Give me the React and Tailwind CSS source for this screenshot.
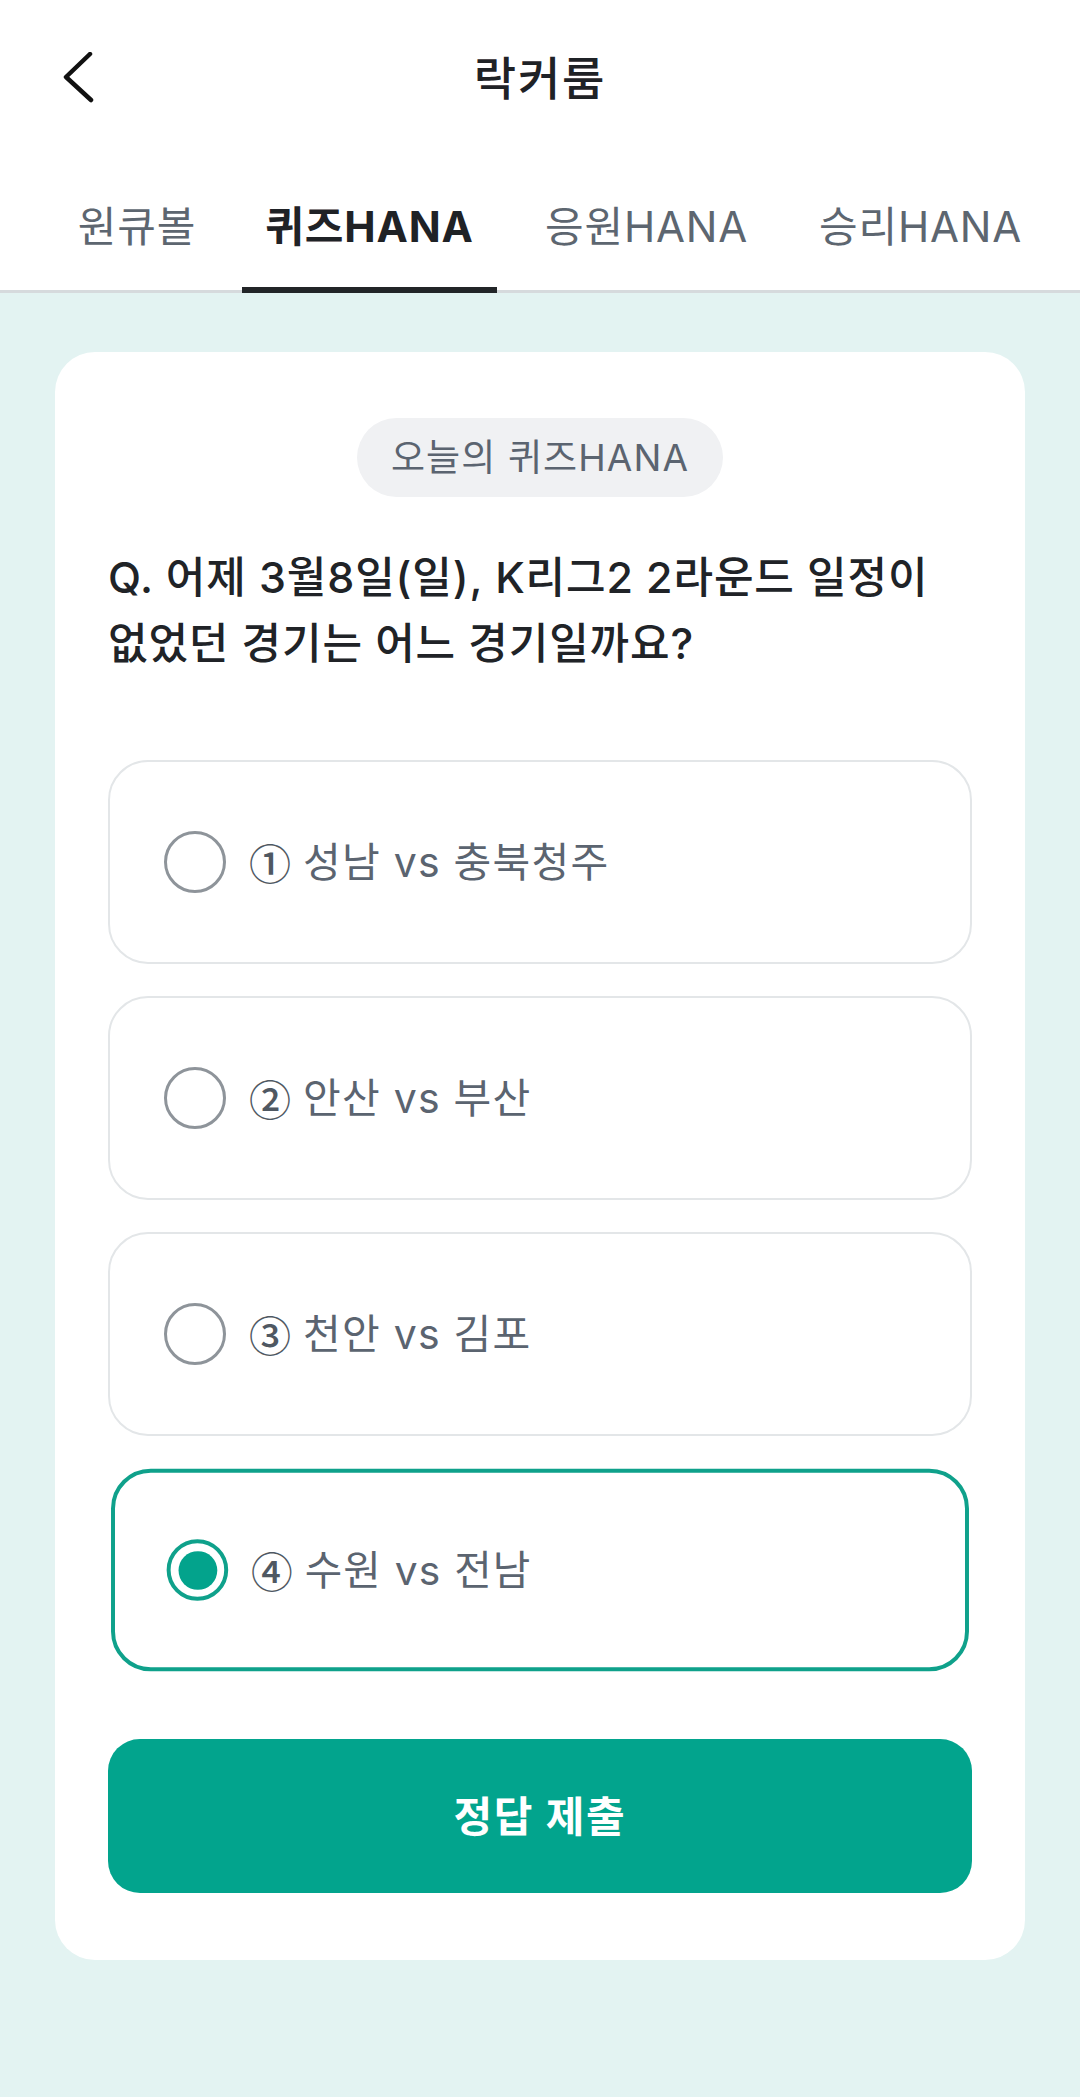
import React from "react";

const tabs = [
  { label: "원큐볼", w: "w-[160px]" },
  { label: "퀴즈HANA", w: "w-[255px]", active: true },
  { label: "응원HANA", w: "w-[249px]" },
  { label: "승리HANA", w: "w-[249px]" },
];

const options = [
  { n: "①", text: "성남 vs 충북청주" },
  { n: "②", text: "안산 vs 부산" },
  { n: "③", text: "천안 vs 김포" },
  { n: "④", text: "수원 vs 전남", selected: true },
];

function Label({ n, text }) {
  return (
    <span className="flex items-center text-[41px] leading-none tracking-[0.03em] text-[#5b6470] whitespace-nowrap">
      <span className="font-[family-name:'Noto_Sans_CJK_KR',sans-serif] font-medium text-[42px] tracking-normal text-[#4f5862] mr-[12px]">
        {n}
      </span>
      {text}
    </span>
  );
}

function Option({ n, text, selected }) {
  if (selected) {
    return (
      <div className="h-[204px] scale-[0.993] rounded-[40px] border-[4px] border-[#0fa18b] bg-white flex items-center pl-[52px] gap-[23px]">
        <div className="w-[62px] h-[62px] rounded-full border-[4px] border-[#0fa18b] flex items-center justify-center shrink-0">
          <div className="w-[39px] h-[39px] rounded-full bg-[#03a38c]" />
        </div>
        <Label n={n} text={text} />
      </div>
    );
  }
  return (
    <div className="h-[204px] rounded-[40px] border-2 border-[#e3e6e8] bg-white flex items-center pl-[54px] gap-[23px]">
      <div className="w-[62px] h-[62px] rounded-full border-[3px] border-[#8e949a] shrink-0" />
      <Label n={n} text={text} />
    </div>
  );
}

export default function App() {
  return (
    <div className="font-[family-name:Inter,'Noto_Sans_CJK_KR',sans-serif] w-[1080px] min-h-[2097px] bg-[#e3f3f2] flex flex-col">
      <div className="bg-white">
        <div className="h-[156px] grid grid-cols-[1fr_auto_1fr] items-center">
          <div className="pl-[62px] flex items-center">
            <svg width="32" height="52" viewBox="0 0 32 52" fill="none">
              <path
                d="M28 2 L4 25 L29 48"
                stroke="#111111"
                strokeWidth="4.5"
                strokeLinecap="round"
                strokeLinejoin="round"
              />
            </svg>
          </div>
          <h1 className="text-[46px] tracking-[0.04em] font-medium text-[#1f2226] leading-none">락커룸</h1>
          <div />
        </div>
        <div className="flex pl-[57px] gap-[25px] border-b-[3px] border-[#d6dadd]">
          {tabs.map((t) => (
            <div
              key={t.label}
              className={`${t.w} h-[137px] -mb-[3px] pt-[11px] flex items-center justify-center border-b-[6px] ${
                t.active ? "border-[#222528]" : "border-transparent"
              }`}
            >
              <span
                className={`text-[42px] tracking-[0.02em] leading-none whitespace-nowrap ${
                  t.active ? "font-bold text-[#1f2226]" : "text-[#5d6670]"
                }`}
              >
                {t.label}
              </span>
            </div>
          ))}
        </div>
      </div>

      <div className="px-[55px] pt-[59px] pb-[137px]">
        <div className="bg-white rounded-[40px] px-[53px] pt-[66px] pb-[67px] flex flex-col">
          <div className="mx-auto w-[366px] h-[79px] rounded-full bg-[#f0f1f3] flex items-center justify-center">
            <span className="text-[37px] tracking-[0.03em] leading-none text-[#5b6470]">오늘의 퀴즈HANA</span>
          </div>
          <p className="mt-[47px] text-[43px] tracking-[0.02em] leading-[66px] font-medium text-[#202327] whitespace-nowrap">
            Q. 어제 3월8일(일), K리그2 2라운드 일정이
            <br />
            없었던 경기는 어느 경기일까요?
          </p>
          <div className="mt-[84px] flex flex-col gap-[32px]">
            {options.map((o) => (
              <Option key={o.n} {...o} />
            ))}
          </div>
          <button className="mt-[67px] h-[154px] rounded-[32px] bg-[#02a48d] text-white text-[42px] tracking-[0.04em] font-bold">
            정답 제출
          </button>
        </div>
      </div>
    </div>
  );
}
